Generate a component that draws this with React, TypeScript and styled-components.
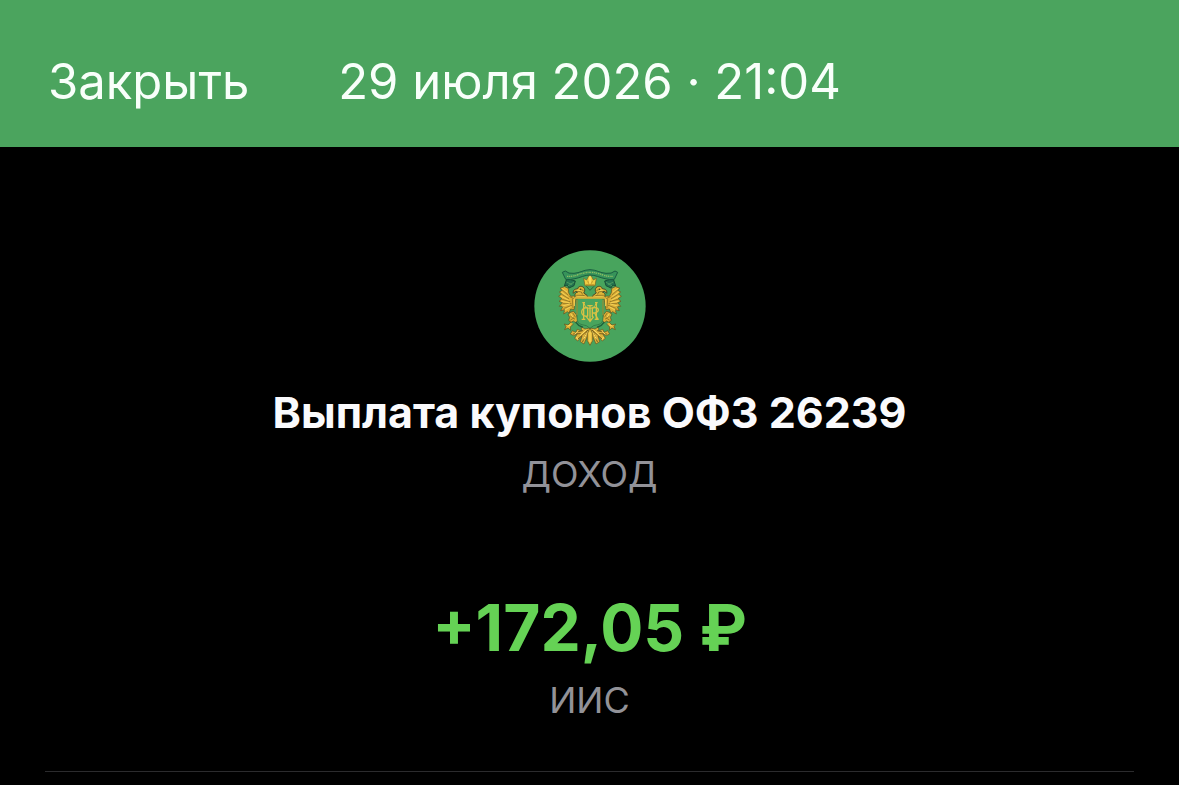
import React from "react";
import styled, { createGlobalStyle } from "styled-components";

const GlobalStyle = createGlobalStyle`
    * {
        box-sizing: border-box;
    }

    body {
        margin: 0;
        background-color: #000;
        color: #fafafc;
        font-family: Inter, "Liberation Sans", sans-serif;
    }
`

const Header = styled.header`
    display: grid;
    grid-template-columns: 1fr auto 1fr;
    align-items: center;
    padding: 52px 48px 35px;
    background-color: #4ba45e;
    color: #f8fffa;
    font-size: 49px;
    line-height: 60px;
`

const CloseButton = styled.button`
    justify-self: start;
    padding: 0;
    border: 0;
    background: none;
    color: inherit;
    font: inherit;
    cursor: pointer;
`

const Main = styled.main`
    display: flex;
    flex-direction: column;
    align-items: center;
    padding: 103px 45px 13px;
    text-align: center;
`

const Logo = styled.svg`
    display: block;
    width: 112px;
    height: 112px;
`

const Title = styled.h1`
    margin: 25px 0 15px;
    font-size: 43px;
    font-weight: 700;
    line-height: 50px;
`

const Caption = styled.p`
    margin: 0;
    color: #929298;
    font-size: 36px;
    line-height: 44px;
`

const Amount = styled.p`
    margin: 93px 0 11px;
    color: #65d255;
    font-size: 64px;
    font-weight: 700;
    line-height: 78px;
`

const Divider = styled.hr`
    width: 100%;
    height: 1px;
    margin: 49px 0 0;
    border: 0;
    background-color: #2b2b2d;
`

// left half of the eagle, the right one is its mirror
const EagleHalf = () => (
    <g strokeLinejoin="round" strokeLinecap="round">
        <path d="M124 119 L118 137 L127 134 L132 143 L147 136 L151 122 L137 118Z" fill="#247451" stroke="#174f37" strokeWidth="3" />
        <path d="M126 126 L140 132 M130 136 L146 126" stroke="#5eac63" strokeWidth="2" fill="none" />

        {/* wing */}
        <path d="M118 139 L105 144 L112 150 L103 155 L110 161 L101 168 L111 175 L102 183 L112 187 L103 198 L114 198 L107 211 L119 208 L116 221 L127 214 L132 218 L137 206 L147 208 L153 174 L146 167 L137 168 L131 157 L130 145Z" fill="#deb136" stroke="#604e20" strokeWidth="2" />
        <path d="M113 150 L129 164 M112 163 L131 175 M112 177 L135 184 M114 190 L138 190 M117 204 L140 195 M134 169 L149 176 M142 176 L144 202" stroke="#79621f" strokeWidth="2" fill="none" />
        <path d="M112 145 L126 155 M109 155 L127 168 M108 168 L130 179 M110 183 L132 187 M112 197 L134 191 M120 209 L136 200 M148 175 V196" stroke="#f3d056" strokeWidth="3" fill="none" />

        {/* head and neck */}
        <path d="M154 172 C146 164 150 158 158 155 L151 153 L145 159 C143 149 150 145 158 146 C159 138 168 136 174 140 C181 145 180 153 176 158 L186 165 L190 173Z" fill="#dfb638" stroke="#4c4624" strokeWidth="3" />
        <path d="M155 165 L174 165 L187 170 M167 145 L175 151 M160 153 L169 155 L172 161" stroke="#69561e" strokeWidth="2" fill="none" />
        <path d="M158 168 L184 169 M157 149 L165 151" stroke="#ffe56b" strokeWidth="2" fill="none" />
        <circle cx="166" cy="147" r="2" fill="#293e20" />

        {/* leg and claws */}
        <path d="M136 216 L146 213 L154 223 L160 240 L151 247 L146 242 L138 246 L131 240 L134 231 L130 224Z" fill="#dbb037" stroke="#514a22" strokeWidth="2" />
        <path d="M137 228 L149 236 M144 219 L151 230 M137 239 L146 233" stroke="#74601e" strokeWidth="2" fill="none" />
        <path d="M137 246 L129 254 L118 251 L123 259 L119 268 L129 263 L137 270 L136 260 L145 251" fill="#e2b435" stroke="#56501f" strokeWidth="2" />
        <path d="M138 221 L143 230 M128 257 L137 254" stroke="#f6d85a" strokeWidth="3" fill="none" />

        {/* side of the tail */}
        <path d="M194 263 L180 266 L169 259 L169 272 L157 267 L152 276 L142 271 L136 281 L146 286 L157 280 L149 294 L158 302 L171 287 L166 304 L177 311 L186 290Z" fill="#dfb33a" stroke="#655322" strokeWidth="2" />
        <path d="M188 270 L159 296 M187 272 L173 304 M173 271 L155 275 M166 280 L145 281" stroke="#79601d" strokeWidth="3" fill="none" />
        <path d="M183 269 L166 285 M188 274 L176 296 M159 273 L150 281 M155 291 L158 297" stroke="#ffe06a" strokeWidth="3" fill="none" />
        <path d="M153 246 Q159 256 172 260" fill="none" stroke="#1d5f3b" strokeWidth="4" />
    </g>
)

const Emblem = () => (
    <Logo viewBox="27 29 336 336" role="img" aria-label="Министерство финансов">
        <circle cx="195" cy="197" r="167" fill="#48a45d" />

        <EagleHalf />
        <g transform="translate(390 0) scale(-1 1)">
            <EagleHalf />
        </g>

        {/* middle feather */}
        <path d="M195 262 L187 280 L187 301 L195 315 L203 301 L203 280Z" fill="#e5bc3c" stroke="#65521d" strokeWidth="2" />
        <path d="M195 275 L195 305" stroke="#ffe069" strokeWidth="3" />

        {/* shield */}
        <path d="M156 173 H234 V233 Q234 250 219 253 L206 256 L195 264 L184 256 L171 253 Q156 250 156 233Z" fill="#48a45d" stroke="#2c6c40" strokeWidth="2" />
        <path d="M150 172 H240" stroke="#d9b23a" strokeWidth="7" />
        <path d="M156 178 V225 M234 178 V225" stroke="#a99a38" strokeWidth="3" />

        {/* monogram */}
        <g fill="none" stroke="#d9c144" strokeWidth="4">
            <path d="M172 187 H180 M210 187 H218 M176 188 V236 M214 188 V236 M170 237 H181 M209 237 H221" />
            <path d="M177 189 Q181 204 195 204 Q209 204 213 189" strokeWidth="3" />
            <path d="M195 196 V243 M187 196 H203 M184 229 L195 243 L206 229" />
            <path d="M188 203 C164 197 164 233 188 227 V203" />
            <path d="M202 230 V203 C226 197 226 219 202 218 M209 218 L219 237" />
        </g>

        {/* crown */}
        <path d="M180 136 L176 114 L185 119 L189 111 L195 105 L201 111 L205 119 L214 114 L210 136Z" fill="#efcb42" stroke="#715d20" strokeWidth="2" />
        <path d="M182 133 H208 M188 121 L191 130 M203 121 L199 130" stroke="#a57e20" strokeWidth="2" />
        <path d="M195 106 V129" stroke="#ffeb7b" strokeWidth="3" />
        <path d="M184 138 L195 150 L207 138" fill="none" stroke="#28633c" strokeWidth="3" />

        {/* ribbon */}
        <path d="M121 92 Q130 101 147 99 C164 98 177 88 195 88 C213 88 226 98 243 99 Q260 101 270 92 L278 96 L268 117 Q254 119 240 115 C224 112 211 104 195 104 C179 104 166 112 150 115 Q136 119 122 117 L112 96Z" fill="#37935a" stroke="#195c40" strokeWidth="3" strokeLinejoin="round" />
        <path d="M126 108 Q144 109 159 103 Q177 96 195 96 Q213 96 231 103 Q246 109 264 108" fill="none" stroke="#91bd62" strokeWidth="4" strokeDasharray="4 2 3 2 5 3" />
    </Logo>
)

const App = () => {

    return (
        <>
            <GlobalStyle />
            <Header>
                <CloseButton type="button">Закрыть</CloseButton>
                <time dateTime="2026-07-29T21:04">29 июля 2026 · 21:04</time>
            </Header>
            <Main>
                <Emblem />
                <Title>Выплата купонов ОФЗ 26239</Title>
                <Caption>ДОХОД</Caption>
                <Amount>+172,05 ₽</Amount>
                <Caption>ИИС</Caption>
                <Divider />
            </Main>
        </>
    )
}


export default App;
